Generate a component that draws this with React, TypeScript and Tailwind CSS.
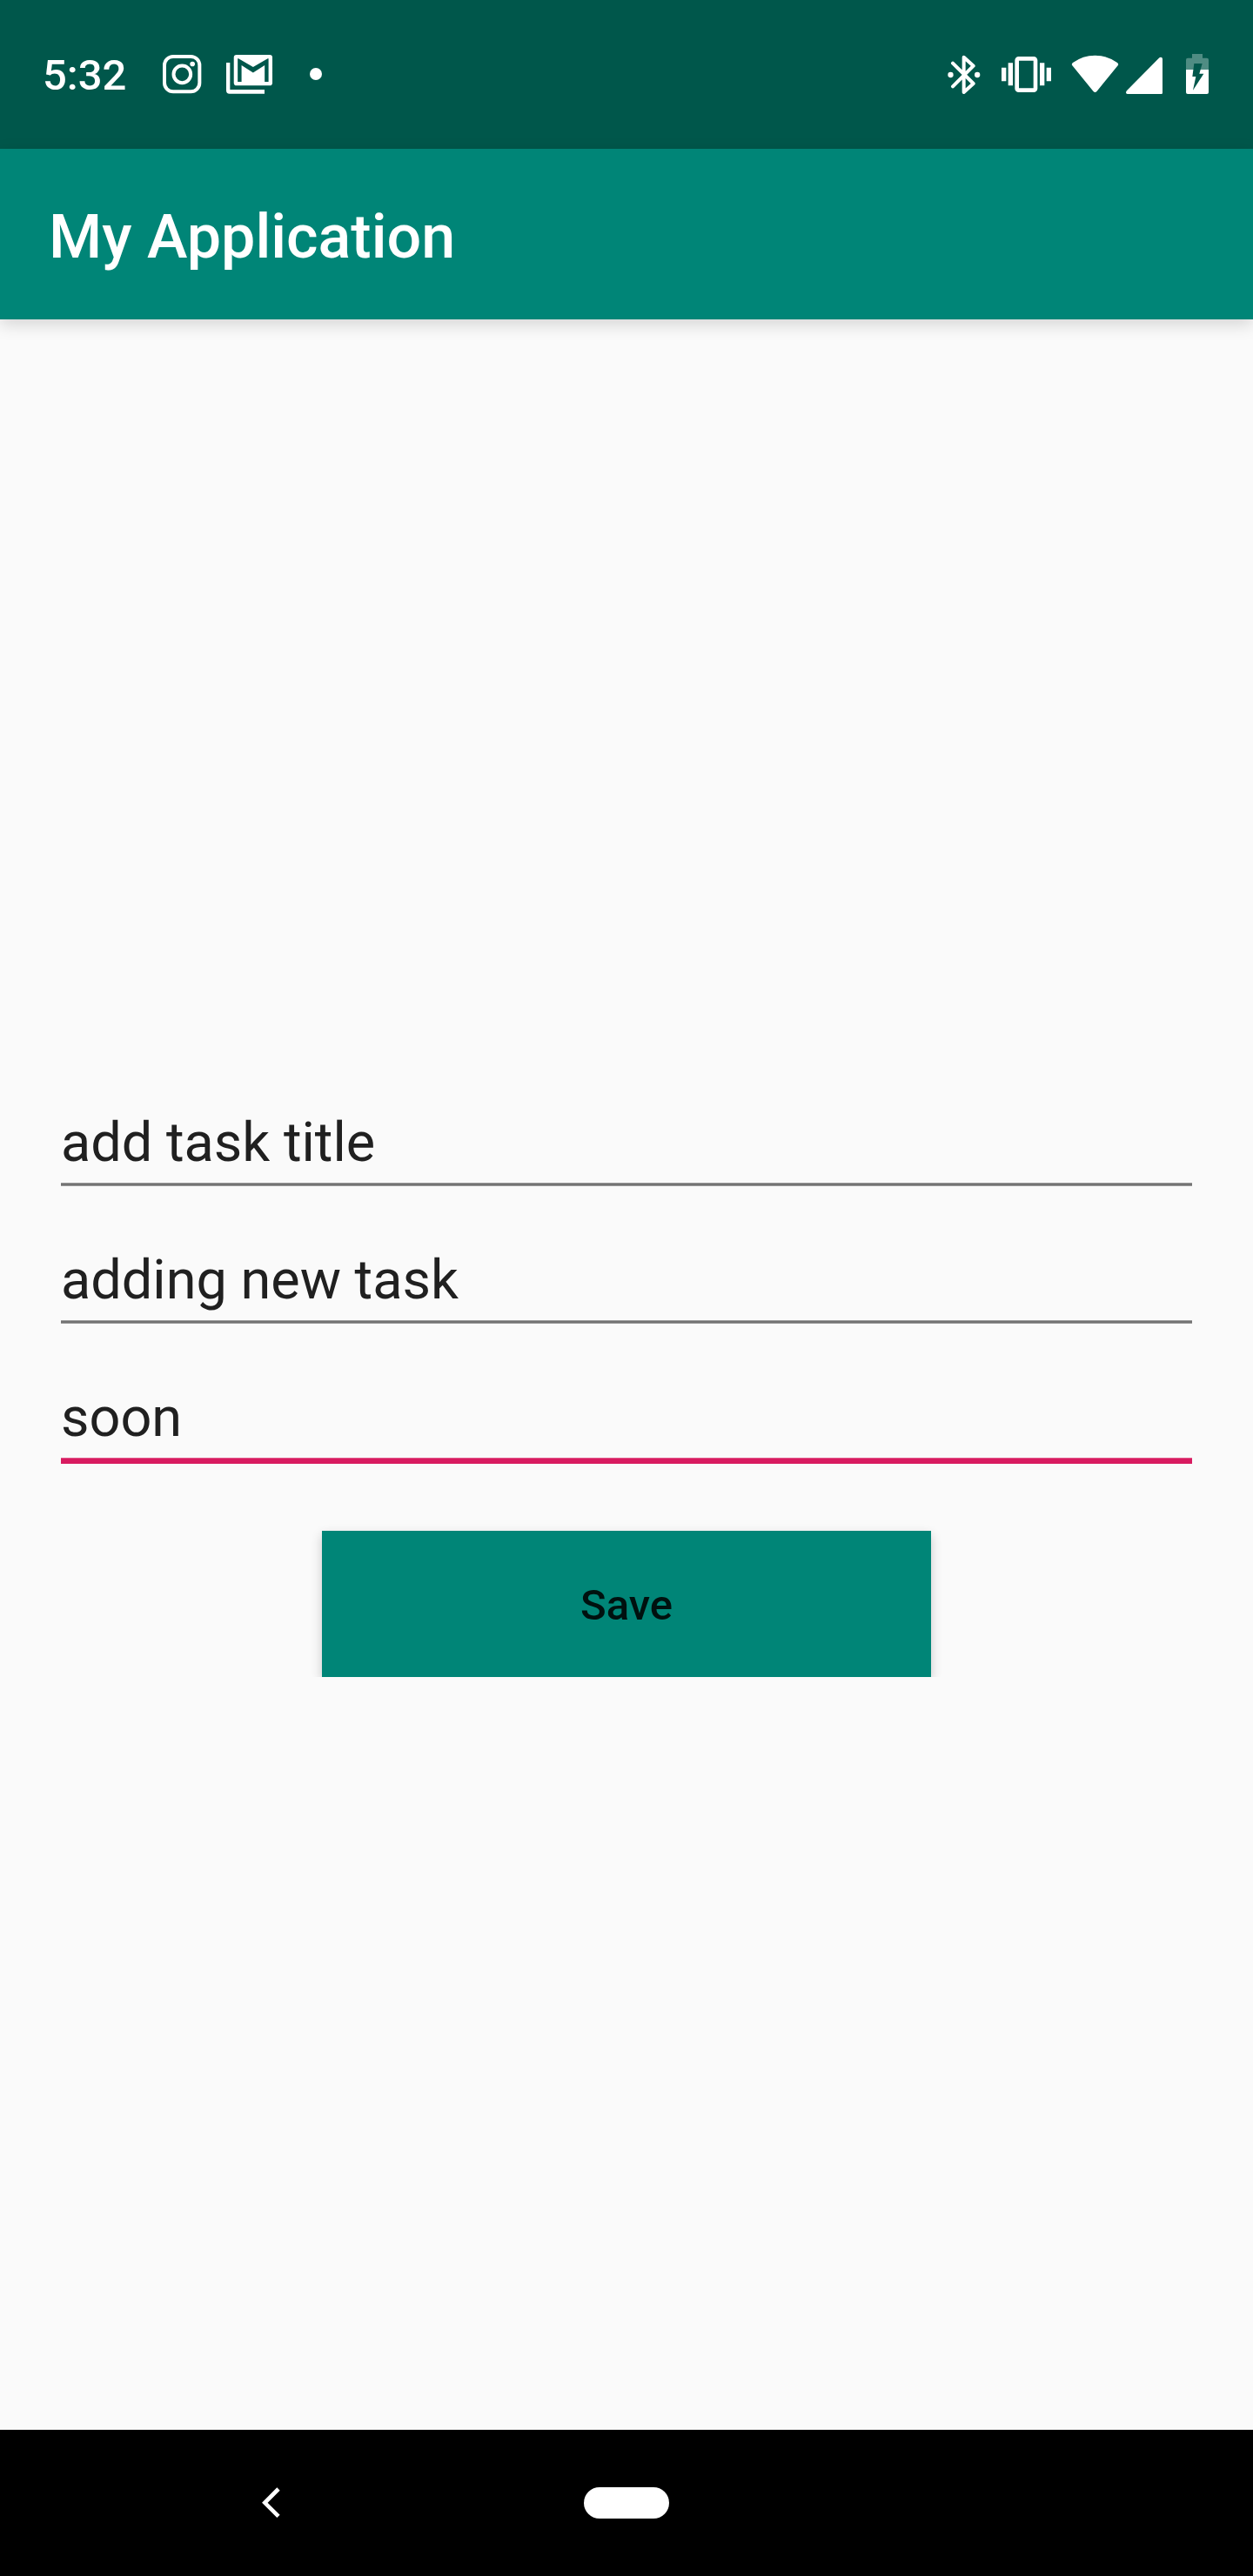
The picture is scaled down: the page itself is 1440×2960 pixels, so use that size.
import React from "react";

const InstagramIcon = () => (
  <svg className="ml-[42px] h-[46px] w-[46px]" viewBox="468 66 138 138" fill="none" stroke="#fff">
    <rect x="477" y="75" width="121" height="121" rx="30" strokeWidth="12" />
    <circle cx="538" cy="136" r="29.5" strokeWidth="12" />
    <circle cx="573.5" cy="100.5" r="8.5" fill="#fff" stroke="none" />
  </svg>
);

const MailStackIcon = () => (
  <svg className="ml-[28px] h-[46px] w-[54px]" viewBox="690 66 162 138" fill="#fff">
    <path d="M690 96h13v93h119v14H701q-11 0-11-11z" />
    <path
      transform="translate(702.9 42.2) scale(6.645)"
      fillRule="evenodd"
      d="M20.6 4H3.4Q2 4 2 5.4v13.2Q2 20 3.4 20h17.2q1.4 0 1.4-1.4V5.4Q22 4 20.6 4zM20 18h-2V9.45L12 13.3 6 9.45V18H4V6h.4L12 10.4 19.6 6h.4z"
    />
  </svg>
);

const BluetoothIcon = () => (
  <svg className="h-[46px] w-[40px]" viewBox="54 66 120 138" fill="none">
    <path
      d="M75 98l71 70-33 30V77l33 30-71 71"
      stroke="#fff"
      strokeWidth="12"
      strokeLinecap="round"
      strokeLinejoin="round"
    />
    <circle cx="67.500" cy="138" r="9.500" fill="#fff" />
    <circle cx="159.500" cy="138" r="9.500" fill="#fff" />
  </svg>
);

const VibrateIcon = () => (
  <svg className="ml-[23px] h-[46px] w-[57px]" viewBox="243 66 171 138" fill="#fff">
    <rect x="296" y="82" width="64" height="109" rx="6" fill="none" stroke="#fff" strokeWidth="14" />
    <path d="M243 113h16v47h-16zM266 97h16v78h-16zM375 97h16v78h-16zM398 113h16v47h-16z" />
  </svg>
);

const WifiIcon = () => (
  <svg className="ml-[23px] h-[46px] w-[56px]" viewBox="33 66 168 138" fill="#fff">
    <path d="M39 96Q73 71 115.500 71T192 96q6 5 2 10l-72 88q-6.500 8-13 0L37 106q-4-5 2-10z" />
  </svg>
);

const SignalIcon = () => (
  <svg className="ml-[7px] h-[46px] w-[42px]" viewBox="222 66 126 138" fill="#fff">
    <path d="M335 81q5-5 10-3 3 2 3 6v116q0 4-4 4H227q-5 0-5-5 0-4 4-8z" />
  </svg>
);

const BatteryIcon = () => (
  <svg className="ml-[27px] h-[46px] w-[26px]" viewBox="429 66 78 138">
    <path d="M450 66h36v14h15q6 0 6 6v34h-78V86q0-6 6-6h15z" fill="#4f8c83" />
    <path d="M429 120h78v78q0 6-6 6h-66q-6 0-6-6z" fill="#fff" />
    <path d="M457 99h28l-10 35h15l-37 57 10-47h-12z" fill="#00574b" />
  </svg>
);

function StatusBar() {
  return (
    <header className="flex h-[171px] items-center justify-between bg-[#00574b] pr-[51px] pb-px pl-[49px] text-white">
      <div className="flex items-center">
        <span className="w-[95px] pt-[3px] text-[49px] leading-[58px] font-medium whitespace-nowrap">5:32</span>
        <InstagramIcon />
        <MailStackIcon />
        <span className="ml-[42px] size-[14px] rounded-full bg-white" />
      </div>
      <div className="flex items-center">
        <BluetoothIcon />
        <VibrateIcon />
        <WifiIcon />
        <SignalIcon />
        <BatteryIcon />
      </div>
    </header>
  );
}

function Field({ value, focused = false }: { value: string; focused?: boolean }) {
  return (
    <div>
      <div className="text-[63px] leading-[74px] text-[#202020]">{value}</div>
      {focused ? (
        <div className="mt-[9px] h-[7px] border-t border-[#e2588b] bg-[#d81b60]" />
      ) : (
        <div className="mt-[9px] h-[4px] border-y border-[#979797] bg-[#737373]" />
      )}
    </div>
  );
}

export default function App() {
  return (
    <div className="flex h-[2960px] w-[1440px] flex-col overflow-hidden bg-[#fafafa] font-['Roboto',sans-serif]">
      <StatusBar />
      <div className="z-10 h-[196px] bg-[#008577] pt-[3px] pl-[56px] text-[70px] leading-[196px] font-medium text-white shadow-[0_6px_18px_rgba(0,0,0,0.15)]">
        My Application
      </div>
      <main className="flex grow flex-col px-[70px] pt-[909px]">
        <div className="flex flex-col gap-[71px]">
          <Field value="add task title" />
          <Field value="adding new task" />
          <Field value="soon" focused />
        </div>
        <div className="mt-[67px] flex justify-center self-center overflow-hidden px-[20px] pt-[10px]">
          <button className="h-[168px] w-[700px] bg-[#008577] pt-[4px] text-[49px] font-medium text-[#00110f] shadow-[0_5px_12px_rgba(0,0,0,0.2)]">
            Save
          </button>
        </div>
      </main>
      <nav className="grid h-[168px] grid-cols-[1fr_98px_1fr] items-center bg-black">
        <svg className="ml-[300px] h-[36px] w-[22px]" viewBox="60 265 66 108" fill="none" stroke="#fff" strokeWidth="14">
          <path d="M120 271L73 318.500 120 365" />
        </svg>
        <span className="h-[36px] rounded-full bg-white" />
      </nav>
    </div>
  );
}
